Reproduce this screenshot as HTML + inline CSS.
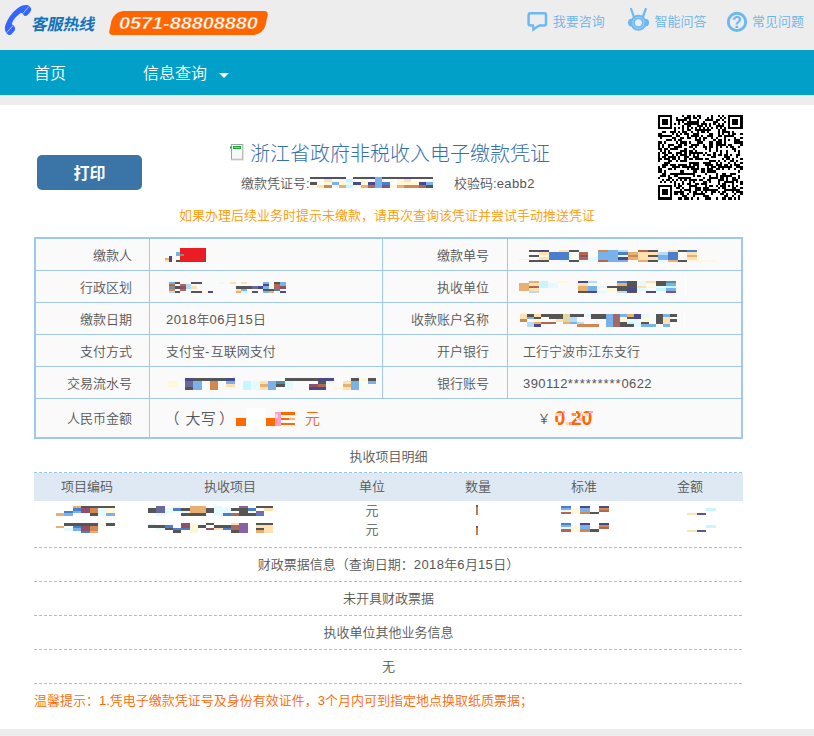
<!DOCTYPE html>
<html lang="zh-CN">
<head>
<meta charset="utf-8">
<title>浙江省政府非税收入电子缴款凭证</title>
<style>
*{box-sizing:border-box;margin:0;padding:0}
html,body{width:814px;height:736px;overflow:hidden;background:#ededed}
body{position:relative;font-family:"Liberation Sans","Noto Sans CJK SC",sans-serif;font-size:13px;font-weight:350;color:#555}
.abs{position:absolute;white-space:nowrap}
#top{left:0;top:0;width:814px;height:50px;background:#ededed}
#nav{left:0;top:50px;width:814px;height:45px;background:#00a0c9}
#main{left:0;top:105px;width:814px;height:624px;background:#fff}
.navt{color:#fff;font-size:16px;line-height:20px}
.hl{color:#6ab4ec;font-size:13px;line-height:16px}
.lbl{text-align:right;line-height:16px}
.val{line-height:16px}
.vl{background:#9fc8ee;width:1px}
.hln{background:#9fc8ee;height:1px}
.dash{left:34px;width:709px;height:1px;background:repeating-linear-gradient(90deg,#96c7ee 0,#96c7ee 3px,transparent 3px,transparent 5px)}
.c{text-align:center;line-height:16px}
.d{letter-spacing:.4px}
.st{letter-spacing:.9px}
</style>
</head>
<body>
<div id="top" class="abs"></div>
<div id="nav" class="abs"></div>
<div id="main" class="abs"></div>

<!-- header -->
<!--ICONS-->
<svg class="abs" style="left:0;top:0" width="814" height="104" viewBox="0 0 814 104">
<!-- phone -->
<path d="M28.3 5.2C24 4.5 20 6 16.3 9.2C12 13 8 18 6 23.4C4.8 26 4.5 29 5.5 31.5C6.5 33.5 8 35 9.5 35C11 35 12 33.5 14.7 30.4C15.5 29 15.5 27.5 13.6 25.5L11.7 23.9C13 20 16 16.5 18.5 14.7C20 13.2 21.5 12.6 22.3 13.3C23 14.5 24 16 25.5 16C27 16 29 13.5 30.4 11.7C31.5 10 31.5 8.5 30.4 7.3Z" fill="#3366ff"/>
<path d="M28.8 6.5L22.8 13.6M13 25.5L6.8 32.6" stroke="#e8e8f4" stroke-width=".7" fill="none"/>
<!-- chat -->
<rect x="528.6" y="13.3" width="17.4" height="12.2" rx="2" fill="none" stroke="#6cb8f0" stroke-width="2.5"/>
<path d="M532 25L532.3 31.8L541 25.5Z" fill="#6cb8f0"/>
<path d="M534 23L534.3 27.2L539 24.2L539 23Z" fill="#ededed"/>
<!-- robot -->
<path d="M631.1 9L633.8 16.5M645.8 9L643 16.5" stroke="#6cb8f0" stroke-width="2.2" stroke-linecap="round" fill="none"/>
<circle cx="631.8" cy="22.6" r="3.9" fill="#6cb8f0"/><circle cx="645.2" cy="22.6" r="3.9" fill="#6cb8f0"/>
<circle cx="638.4" cy="22.8" r="8" fill="#6cb8f0"/>
<circle cx="638.4" cy="22.8" r="5.6" fill="none" stroke="#d4e8f8" stroke-width=".6"/>
<circle cx="638.4" cy="22.8" r="3.5" fill="#ededed"/>
<!-- question -->
<circle cx="737" cy="21.9" r="8.7" fill="none" stroke="#6cb8f0" stroke-width="2.9"/>
<text x="737" y="27.6" text-anchor="middle" font-family="Liberation Sans, sans-serif" font-weight="bold" font-size="16" fill="#6cb8f0">?</text>
</svg>
<!-- doc icon -->
<svg class="abs" style="left:228px;top:142px" width="18" height="20" viewBox="228 142 18 20">
<rect x="231.5" y="144.5" width="11.3" height="14.8" fill="#f6f9f9" stroke="#9aa6a8" stroke-width="1"/>
<rect x="230.8" y="159.4" width="13" height="1" fill="#c8cccc"/>
<rect x="233" y="146" width="8" height="3" fill="#22aa33"/>
<rect x="234" y="147" width="6" height="1" fill="#66dd77"/>
<path d="M230 146L232 147.5L230 149Z" fill="#22aa33"/>
</svg>
<!--/ICONS-->
<div class="abs" style="left:31.7px;top:14.5px;font-size:16px;line-height:20px;font-weight:bold;transform:skewX(-11deg);color:#1273bb;letter-spacing:-0.3px">客服热线</div>
<div class="abs" style="left:110.5px;top:11px;width:155px;height:24px;background:#ff6600;border-radius:10px 4px 10px 4px;transform:skewX(-12deg)"></div>
<div class="abs" style="left:119px;top:14.2px;font-size:17px;line-height:20px;font-weight:bold;font-style:italic;color:#fff;-webkit-text-stroke:0.35px #ff6600;transform-origin:0 50%;transform:scaleX(1.166)">0571-88808880</div>

<div class="abs hl" style="left:552.7px;top:13.5px">我要咨询</div>
<div class="abs hl" style="left:654.4px;top:13.5px">智能问答</div>
<div class="abs hl" style="left:752px;top:13.5px">常见问题</div>

<div class="abs navt" style="left:34px;top:64px">首页</div>
<div class="abs navt" style="left:143px;top:64px">信息查询</div>
<div class="abs" style="left:219px;top:73px;width:0;height:0;border-left:5px solid transparent;border-right:5px solid transparent;border-top:5px solid #fff"></div>

<!-- print button -->
<div class="abs" style="left:37px;top:155px;width:105px;height:35px;background:#3b75a8;border-radius:5px;color:#fff;font-size:16px;font-weight:bold;text-align:center;line-height:37px">打印</div>

<!-- title -->
<div class="abs" style="left:250px;top:141px;font-size:20px;line-height:26px;font-weight:300;color:#3570b0">浙江省政府非税收入电子缴款凭证</div>
<div class="abs" style="left:241px;top:175.7px;line-height:16px;color:#555">缴款凭证号:</div>
<div class="abs" style="left:454px;top:175.7px;line-height:16px;color:#555">校验码:<span class="d">eabb2</span></div>
<div class="abs" style="left:179px;top:208.4px;line-height:16px;color:#ff9900">如果办理后续业务时提示未缴款，请再次查询该凭证并尝试手动推送凭证</div>

<!-- table -->
<div class="abs" style="left:34px;top:237px;width:709px;height:202px;border:2px solid #9fc8ee;background:#fafafa"></div>
<div class="abs vl" style="left:149px;top:239px;height:198px"></div>
<div class="abs vl" style="left:382px;top:239px;height:159px"></div>
<div class="abs vl" style="left:507px;top:239px;height:159px"></div>
<div class="abs hln" style="left:36px;top:270px;width:705px"></div>
<div class="abs hln" style="left:36px;top:302px;width:705px"></div>
<div class="abs hln" style="left:36px;top:334px;width:705px"></div>
<div class="abs hln" style="left:36px;top:366px;width:705px"></div>
<div class="abs hln" style="left:36px;top:398px;width:705px"></div>

<div class="abs lbl" style="left:36px;width:96px;top:248px">缴款人</div>
<div class="abs lbl" style="left:36px;width:96px;top:280px">行政区划</div>
<div class="abs lbl" style="left:36px;width:96px;top:312px">缴款日期</div>
<div class="abs lbl" style="left:36px;width:96px;top:344px">支付方式</div>
<div class="abs lbl" style="left:36px;width:96px;top:376px">交易流水号</div>
<div class="abs lbl" style="left:36px;width:96px;top:411px">人民币金额</div>

<div class="abs lbl" style="left:383px;width:106px;top:248px">缴款单号</div>
<div class="abs lbl" style="left:383px;width:106px;top:280px">执收单位</div>
<div class="abs lbl" style="left:383px;width:106px;top:312px">收款账户名称</div>
<div class="abs lbl" style="left:383px;width:106px;top:344px">开户银行</div>
<div class="abs lbl" style="left:383px;width:106px;top:376px">银行账号</div>

<div class="abs val" style="left:166px;top:312px"><span class="d">2018</span>年<span class="d">06</span>月<span class="d">15</span>日</div>
<div class="abs val" style="left:166px;top:344px">支付宝<span style="letter-spacing:1.4px">-</span>互联网支付</div>
<div class="abs val" style="left:523px;top:344px">工行宁波市江东支行</div>
<div class="abs val" style="left:523px;top:376px"><span class="d">390112</span><span class="st">*********</span><span class="d">0622</span></div>
<div class="abs val" style="left:164.5px;top:410px;font-size:15px;line-height:18px">（</div><div class="abs val" style="left:185.4px;top:410px;font-size:15px;line-height:18px;letter-spacing:.4px">大写</div><div class="abs val" style="left:219px;top:410px;font-size:15px;line-height:18px">）</div>
<div class="abs val" style="left:305px;top:410px;font-size:15px;line-height:18px;color:#ff6600">元</div>
<div class="abs val" style="left:537.5px;top:411px">￥</div>
<div class="abs" style="left:554.5px;top:406.6px;font-size:19.5px;line-height:22px;font-weight:bold;color:#ff6600;letter-spacing:0">0.20</div>

<div class="abs" style="left:685px;top:277px;width:1px;height:21px;background:#fff"></div>
<div class="abs" style="left:684px;top:311px;width:1px;height:18px;background:#fff"></div>
<!-- detail -->
<div class="abs c" style="left:34px;width:709px;top:448.7px">执收项目明细</div>
<div class="abs" style="left:34px;top:473px;width:709px;height:28px;background:#dfe9f4"></div>
<div class="abs dash" style="top:472px"></div>
<div class="abs c" style="left:37px;width:100px;top:479px">项目编码</div>
<div class="abs c" style="left:180px;width:100px;top:479px">执收项目</div>
<div class="abs c" style="left:322px;width:100px;top:479px">单位</div>
<div class="abs c" style="left:428px;width:100px;top:479px">数量</div>
<div class="abs c" style="left:534px;width:100px;top:479px">标准</div>
<div class="abs c" style="left:640px;width:100px;top:479px">金额</div>
<div class="abs c" style="left:322px;width:100px;top:503px">元</div>
<div class="abs c" style="left:322px;width:100px;top:522px">元</div>

<div class="abs dash" style="top:547px"></div>
<div class="abs c" style="left:34px;width:709px;top:557px">财政票据信息（查询日期：<span class="d">2018</span>年<span class="d">6</span>月<span class="d">15</span>日）</div>
<div class="abs dash" style="top:581px"></div>
<div class="abs c" style="left:34px;width:709px;top:591px">未开具财政票据</div>
<div class="abs dash" style="top:615px"></div>
<div class="abs c" style="left:34px;width:709px;top:625px">执收单位其他业务信息</div>
<div class="abs dash" style="top:649px"></div>
<div class="abs c" style="left:34px;width:709px;top:659px">无</div>
<div class="abs dash" style="top:683px"></div>
<div class="abs" style="left:34px;top:693px;line-height:16px;color:#ff6600">温馨提示：1.凭电子缴款凭证号及身份有效证件，3个月内可到指定地点换取纸质票据；</div>

<!--QR-->
<svg class="abs" style="left:658px;top:115px" width="85" height="85" viewBox="0 0 85 85" shape-rendering="crispEdges"><rect width="85" height="85" fill="#fff"/><path fill="#000" d="M0 0h14v2h-14zM24 0h2v2h-2zM29 0h4v2h-4zM35 0h2v2h-2zM39 0h4v2h-4zM53 0h2v2h-2zM60 0h2v2h-2zM64 0h2v2h-2zM70 0h15v2h-15zM0 2h2v2h-2zM12 2h2v2h-2zM18 2h2v2h-2zM26 2h7v2h-7zM35 2h4v2h-4zM41 2h2v2h-2zM49 2h2v2h-2zM53 2h2v2h-2zM62 2h2v2h-2zM66 2h2v2h-2zM70 2h2v2h-2zM82 2h3v2h-3zM0 4h2v2h-2zM4 4h6v2h-6zM12 4h2v2h-2zM18 4h11v2h-11zM31 4h2v2h-2zM39 4h2v2h-2zM47 4h8v2h-8zM58 4h4v2h-4zM64 4h2v2h-2zM70 4h2v2h-2zM74 4h6v2h-6zM82 4h3v2h-3zM0 6h2v2h-2zM4 6h6v2h-6zM12 6h2v2h-2zM20 6h2v2h-2zM24 6h2v2h-2zM29 6h12v2h-12zM45 6h2v2h-2zM55 6h5v2h-5zM66 6h2v2h-2zM70 6h2v2h-2zM74 6h6v2h-6zM82 6h3v2h-3zM0 8h2v2h-2zM4 8h6v2h-6zM12 8h2v2h-2zM16 8h2v2h-2zM20 8h2v2h-2zM26 8h15v2h-15zM43 8h6v2h-6zM51 8h2v2h-2zM55 8h3v2h-3zM60 8h2v2h-2zM64 8h2v2h-2zM70 8h2v2h-2zM74 8h6v2h-6zM82 8h3v2h-3zM0 10h2v2h-2zM12 10h2v2h-2zM24 10h2v2h-2zM29 10h4v2h-4zM39 10h6v2h-6zM47 10h2v2h-2zM51 10h2v2h-2zM58 10h8v2h-8zM70 10h2v2h-2zM82 10h3v2h-3zM0 12h14v2h-14zM16 12h2v2h-2zM20 12h2v2h-2zM24 12h2v2h-2zM29 12h2v2h-2zM33 12h2v2h-2zM37 12h2v2h-2zM41 12h2v2h-2zM45 12h2v2h-2zM49 12h2v2h-2zM53 12h2v2h-2zM58 12h2v2h-2zM62 12h2v2h-2zM66 12h2v2h-2zM70 12h15v2h-15zM16 14h2v2h-2zM24 14h2v2h-2zM29 14h4v2h-4zM37 14h16v2h-16zM60 14h2v2h-2zM64 14h4v2h-4zM4 16h4v2h-4zM12 16h6v2h-6zM20 16h2v2h-2zM24 16h5v2h-5zM33 16h2v2h-2zM39 16h2v2h-2zM43 16h4v2h-4zM49 16h2v2h-2zM60 16h2v2h-2zM64 16h8v2h-8zM74 16h2v2h-2zM0 18h4v2h-4zM14 18h2v2h-2zM18 18h2v2h-2zM22 18h2v2h-2zM26 18h5v2h-5zM35 18h6v2h-6zM51 18h4v2h-4zM60 18h2v2h-2zM64 18h2v2h-2zM70 18h2v2h-2zM74 18h4v2h-4zM82 18h3v2h-3zM0 20h14v2h-14zM18 20h4v2h-4zM29 20h2v2h-2zM33 20h8v2h-8zM43 20h2v2h-2zM49 20h6v2h-6zM60 20h4v2h-4zM66 20h10v2h-10zM2 22h2v2h-2zM14 22h4v2h-4zM22 22h4v2h-4zM29 22h4v2h-4zM37 22h2v2h-2zM41 22h2v2h-2zM45 22h4v2h-4zM53 22h2v2h-2zM58 22h2v2h-2zM66 22h2v2h-2zM76 22h2v2h-2zM82 22h3v2h-3zM8 24h6v2h-6zM16 24h2v2h-2zM20 24h4v2h-4zM37 24h6v2h-6zM45 24h2v2h-2zM55 24h3v2h-3zM60 24h4v2h-4zM66 24h2v2h-2zM70 24h2v2h-2zM76 24h6v2h-6zM0 26h4v3h-4zM6 26h2v3h-2zM18 26h2v3h-2zM22 26h7v3h-7zM31 26h2v3h-2zM39 26h6v3h-6zM51 26h4v3h-4zM58 26h6v3h-6zM66 26h2v3h-2zM76 26h9v3h-9zM0 29h2v2h-2zM4 29h2v2h-2zM10 29h6v2h-6zM20 29h4v2h-4zM26 29h3v2h-3zM33 29h8v2h-8zM45 29h2v2h-2zM51 29h4v2h-4zM58 29h10v2h-10zM70 29h4v2h-4zM82 29h3v2h-3zM0 31h2v2h-2zM4 31h2v2h-2zM10 31h2v2h-2zM16 31h8v2h-8zM31 31h4v2h-4zM37 31h2v2h-2zM45 31h4v2h-4zM51 31h4v2h-4zM58 31h2v2h-2zM62 31h2v2h-2zM68 31h2v2h-2zM72 31h4v2h-4zM80 31h2v2h-2zM0 33h4v2h-4zM6 33h4v2h-4zM12 33h8v2h-8zM26 33h3v2h-3zM35 33h2v2h-2zM47 33h2v2h-2zM51 33h2v2h-2zM58 33h2v2h-2zM74 33h4v2h-4zM2 35h2v2h-2zM6 35h2v2h-2zM10 35h2v2h-2zM22 35h7v2h-7zM31 35h4v2h-4zM37 35h2v2h-2zM51 35h2v2h-2zM58 35h2v2h-2zM62 35h2v2h-2zM68 35h2v2h-2zM76 35h2v2h-2zM80 35h2v2h-2zM0 37h2v2h-2zM4 37h4v2h-4zM10 37h4v2h-4zM18 37h6v2h-6zM26 37h3v2h-3zM31 37h14v2h-14zM47 37h2v2h-2zM55 37h3v2h-3zM62 37h2v2h-2zM68 37h2v2h-2zM80 37h2v2h-2zM0 39h2v2h-2zM6 39h4v2h-4zM14 39h2v2h-2zM18 39h2v2h-2zM22 39h7v2h-7zM31 39h2v2h-2zM35 39h2v2h-2zM39 39h2v2h-2zM45 39h2v2h-2zM49 39h4v2h-4zM55 39h3v2h-3zM60 39h4v2h-4zM66 39h4v2h-4zM72 39h2v2h-2zM78 39h4v2h-4zM0 41h2v2h-2zM4 41h4v2h-4zM10 41h8v2h-8zM20 41h2v2h-2zM26 41h5v2h-5zM35 41h6v2h-6zM53 41h5v2h-5zM66 41h6v2h-6zM78 41h2v2h-2zM0 43h4v2h-4zM6 43h6v2h-6zM14 43h4v2h-4zM20 43h2v2h-2zM26 43h3v2h-3zM31 43h4v2h-4zM37 43h8v2h-8zM47 43h4v2h-4zM64 43h2v2h-2zM68 43h4v2h-4zM74 43h2v2h-2zM82 43h3v2h-3zM0 45h2v2h-2zM10 45h4v2h-4zM18 45h2v2h-2zM22 45h7v2h-7zM51 45h7v2h-7zM60 45h2v2h-2zM66 45h2v2h-2zM72 45h4v2h-4zM78 45h2v2h-2zM6 47h6v2h-6zM31 47h10v2h-10zM45 47h8v2h-8zM58 47h2v2h-2zM62 47h2v2h-2zM70 47h2v2h-2zM76 47h2v2h-2zM82 47h3v2h-3zM4 49h6v2h-6zM12 49h6v2h-6zM20 49h9v2h-9zM31 49h2v2h-2zM35 49h6v2h-6zM47 49h8v2h-8zM58 49h6v2h-6zM66 49h4v2h-4zM72 49h2v2h-2zM76 49h6v2h-6zM0 51h2v2h-2zM4 51h4v2h-4zM14 51h8v2h-8zM24 51h13v2h-13zM39 51h2v2h-2zM49 51h2v2h-2zM53 51h5v2h-5zM60 51h14v2h-14zM78 51h7v2h-7zM0 53h4v2h-4zM10 53h4v2h-4zM16 53h2v2h-2zM29 53h2v2h-2zM33 53h8v2h-8zM43 53h4v2h-4zM49 53h6v2h-6zM58 53h4v2h-4zM64 53h2v2h-2zM70 53h2v2h-2zM76 53h2v2h-2zM82 53h3v2h-3zM0 55h4v3h-4zM6 55h2v3h-2zM22 55h4v3h-4zM35 55h4v3h-4zM43 55h4v3h-4zM49 55h9v3h-9zM80 55h2v3h-2zM4 58h4v2h-4zM12 58h25v2h-25zM47 58h2v2h-2zM58 58h2v2h-2zM64 58h4v2h-4zM72 58h6v2h-6zM2 60h6v2h-6zM10 60h2v2h-2zM16 60h4v2h-4zM35 60h2v2h-2zM39 60h4v2h-4zM51 60h2v2h-2zM58 60h2v2h-2zM62 60h12v2h-12zM80 60h2v2h-2zM0 62h2v2h-2zM10 62h4v2h-4zM20 62h13v2h-13zM45 62h2v2h-2zM51 62h9v2h-9zM62 62h4v2h-4zM68 62h2v2h-2zM74 62h4v2h-4zM80 62h2v2h-2zM4 64h2v2h-2zM8 64h4v2h-4zM14 64h2v2h-2zM18 64h2v2h-2zM22 64h2v2h-2zM26 64h3v2h-3zM31 64h8v2h-8zM41 64h4v2h-4zM49 64h4v2h-4zM60 64h6v2h-6zM68 64h2v2h-2zM74 64h6v2h-6zM2 66h2v2h-2zM6 66h2v2h-2zM12 66h2v2h-2zM16 66h2v2h-2zM24 66h2v2h-2zM31 66h2v2h-2zM35 66h2v2h-2zM45 66h4v2h-4zM51 66h2v2h-2zM60 66h2v2h-2zM66 66h10v2h-10zM78 66h2v2h-2zM82 66h3v2h-3zM16 68h2v2h-2zM20 68h2v2h-2zM24 68h2v2h-2zM29 68h4v2h-4zM37 68h4v2h-4zM43 68h6v2h-6zM60 68h2v2h-2zM64 68h4v2h-4zM74 68h2v2h-2zM82 68h3v2h-3zM0 70h14v2h-14zM16 70h2v2h-2zM20 70h4v2h-4zM31 70h8v2h-8zM47 70h2v2h-2zM51 70h4v2h-4zM58 70h2v2h-2zM62 70h6v2h-6zM70 70h2v2h-2zM74 70h2v2h-2zM78 70h2v2h-2zM0 72h2v2h-2zM12 72h2v2h-2zM18 72h4v2h-4zM24 72h2v2h-2zM31 72h2v2h-2zM37 72h6v2h-6zM45 72h6v2h-6zM60 72h2v2h-2zM64 72h4v2h-4zM74 72h4v2h-4zM82 72h3v2h-3zM0 74h2v2h-2zM4 74h6v2h-6zM12 74h2v2h-2zM22 74h2v2h-2zM26 74h7v2h-7zM37 74h6v2h-6zM45 74h15v2h-15zM66 74h16v2h-16zM0 76h2v2h-2zM4 76h6v2h-6zM12 76h2v2h-2zM16 76h10v2h-10zM31 76h2v2h-2zM35 76h4v2h-4zM43 76h2v2h-2zM47 76h2v2h-2zM53 76h5v2h-5zM60 76h2v2h-2zM64 76h4v2h-4zM74 76h2v2h-2zM78 76h7v2h-7zM0 78h2v2h-2zM4 78h6v2h-6zM12 78h2v2h-2zM16 78h4v2h-4zM22 78h4v2h-4zM29 78h2v2h-2zM35 78h12v2h-12zM53 78h2v2h-2zM62 78h4v2h-4zM68 78h2v2h-2zM76 78h2v2h-2zM82 78h3v2h-3zM0 80h2v2h-2zM12 80h2v2h-2zM24 80h5v2h-5zM35 80h2v2h-2zM45 80h6v2h-6zM66 80h4v2h-4zM74 80h2v2h-2zM80 80h2v2h-2zM0 82h14v3h-14zM20 82h4v3h-4zM26 82h5v3h-5zM33 82h2v3h-2zM39 82h2v3h-2zM47 82h6v3h-6zM58 82h2v3h-2zM64 82h4v3h-4zM70 82h4v3h-4zM76 82h2v3h-2zM80 82h2v3h-2z"/></svg>
<!--/QR-->
<!--MOSAIC-->
<svg class="abs" style="left:0;top:0;opacity:1" width="814" height="736" viewBox="0 0 814 736" shape-rendering="crispEdges"><rect x="310" y="177" width="14.48" height="2" fill="#555555"/><rect x="324.48" y="177" width="7.24" height="2" fill="#4a4a8a"/><rect x="331.72" y="177" width="7.24" height="2" fill="#555555"/><rect x="338.96" y="177" width="7.24" height="2" fill="#4a4a8a"/><rect x="353.44" y="177" width="14.48" height="2" fill="#555555"/><rect x="367.92" y="177" width="7.24" height="2" fill="#4a4a8a"/><rect x="375.16" y="177" width="7.24" height="2" fill="#78b2e8"/><rect x="382.4" y="177" width="21.72" height="2" fill="#555555"/><rect x="404.12" y="177" width="7.24" height="2" fill="#4a4a8a"/><rect x="411.36" y="177" width="21.72" height="2" fill="#555555"/><rect x="324.48" y="179" width="7.24" height="3" fill="#ffe0b0"/><rect x="338.96" y="179" width="7.24" height="3" fill="#fff8d8"/><rect x="346.2" y="179" width="7.24" height="3" fill="#c8f6ff"/><rect x="360.68" y="179" width="7.24" height="3" fill="#fff8d8"/><rect x="375.16" y="179" width="7.24" height="3" fill="#78b2e8"/><rect x="396.88" y="179" width="7.24" height="3" fill="#fff8d8"/><rect x="404.12" y="179" width="7.24" height="3" fill="#ffe0b0"/><rect x="310" y="182" width="7.24" height="3" fill="#555555"/><rect x="324.48" y="182" width="7.24" height="3" fill="#fff8d8"/><rect x="331.72" y="182" width="7.24" height="3" fill="#78b2e8"/><rect x="338.96" y="182" width="7.24" height="3" fill="#fff8d8"/><rect x="346.2" y="182" width="7.24" height="3" fill="#e4faff"/><rect x="353.44" y="182" width="7.24" height="3" fill="#4a4a8a"/><rect x="360.68" y="182" width="7.24" height="3" fill="#fff8d8"/><rect x="367.92" y="182" width="7.24" height="3" fill="#4a4a8a"/><rect x="375.16" y="182" width="7.24" height="3" fill="#78b2e8"/><rect x="382.4" y="182" width="7.24" height="3" fill="#4a7fd0"/><rect x="396.88" y="182" width="21.72" height="3" fill="#fff8d8"/><rect x="418.6" y="182" width="7.24" height="3" fill="#4a4a8a"/><rect x="425.84" y="182" width="7.24" height="3" fill="#78b2e8"/><rect x="310" y="185" width="7.24" height="3" fill="#fff8d8"/><rect x="317.24" y="185" width="7.24" height="3" fill="#ffe0b0"/><rect x="324.48" y="185" width="7.24" height="3" fill="#d08850"/><rect x="338.96" y="185" width="7.24" height="3" fill="#e8b070"/><rect x="346.2" y="185" width="7.24" height="3" fill="#c8f6ff"/><rect x="353.44" y="185" width="7.24" height="3" fill="#fff8d8"/><rect x="360.68" y="185" width="7.24" height="3" fill="#e8b070"/><rect x="367.92" y="185" width="7.24" height="3" fill="#b06850"/><rect x="375.16" y="185" width="7.24" height="3" fill="#78b2e8"/><rect x="382.4" y="185" width="7.24" height="3" fill="#905068"/><rect x="389.64" y="185" width="7.24" height="3" fill="#fff8d8"/><rect x="396.88" y="185" width="7.24" height="3" fill="#e8b070"/><rect x="404.12" y="185" width="14.48" height="3" fill="#d08850"/><rect x="418.6" y="185" width="7.24" height="3" fill="#b06850"/><rect x="425.84" y="185" width="7.24" height="3" fill="#555555"/><rect x="180" y="248" width="26" height="14" fill="#ec1c24"/><rect x="168.5" y="256" width="3.5" height="2" fill="#4a4a8a"/><rect x="165" y="258" width="3.5" height="2" fill="#e8b070"/><rect x="168.5" y="258" width="3.5" height="2" fill="#4a4a8a"/><rect x="165" y="260" width="3.5" height="2" fill="#ffe0b0"/><rect x="168.5" y="260" width="3.5" height="2" fill="#4a4a8a"/><rect x="176" y="252" width="4" height="2" fill="#78b2e8"/><rect x="176" y="254" width="4" height="2" fill="#78b2e8"/><rect x="180" y="254" width="4" height="2" fill="#8a8a8a"/><rect x="176" y="260" width="4" height="2" fill="#555555"/><rect x="203" y="260" width="3" height="2" fill="#555"/><rect x="169" y="282" width="5.55" height="2.2" fill="#78b2e8"/><rect x="174.55" y="282" width="5.55" height="2.2" fill="#555555"/><rect x="191.2" y="282" width="11.1" height="2.2" fill="#555555"/><rect x="218.95" y="282" width="5.55" height="2.2" fill="#e4faff"/><rect x="230.05" y="282" width="5.55" height="2.2" fill="#ffe0b0"/><rect x="241.15" y="282" width="5.55" height="2.2" fill="#ffe0b0"/><rect x="263.35" y="282" width="5.55" height="2.2" fill="#78b2e8"/><rect x="274.45" y="282" width="5.55" height="2.2" fill="#555555"/><rect x="280" y="282" width="5.55" height="2.2" fill="#78b2e8"/><rect x="169" y="284.2" width="5.55" height="2.2" fill="#b06850"/><rect x="180.1" y="284.2" width="5.55" height="2.2" fill="#b06850"/><rect x="185.65" y="284.2" width="5.55" height="2.2" fill="#b8dcf8"/><rect x="263.35" y="284.2" width="5.55" height="2.2" fill="#4a4a8a"/><rect x="268.9" y="284.2" width="5.55" height="2.2" fill="#fff8d8"/><rect x="274.45" y="284.2" width="5.55" height="2.2" fill="#b06850"/><rect x="280" y="284.2" width="5.55" height="2.2" fill="#78b2e8"/><rect x="169" y="286.4" width="5.55" height="2.2" fill="#8a8a8a"/><rect x="174.55" y="286.4" width="5.55" height="2.2" fill="#555555"/><rect x="180.1" y="286.4" width="5.55" height="2.2" fill="#905068"/><rect x="185.65" y="286.4" width="5.55" height="2.2" fill="#b8dcf8"/><rect x="191.2" y="286.4" width="5.55" height="2.2" fill="#ffe0b0"/><rect x="235.6" y="286.4" width="16.65" height="2.2" fill="#555555"/><rect x="252.25" y="286.4" width="5.55" height="2.2" fill="#6a6a9a"/><rect x="257.8" y="286.4" width="5.55" height="2.2" fill="#4a4a8a"/><rect x="263.35" y="286.4" width="5.55" height="2.2" fill="#78b2e8"/><rect x="268.9" y="286.4" width="5.55" height="2.2" fill="#e4faff"/><rect x="274.45" y="286.4" width="5.55" height="2.2" fill="#b06850"/><rect x="280" y="286.4" width="5.55" height="2.2" fill="#905068"/><rect x="169" y="288.6" width="5.55" height="2.2" fill="#d08850"/><rect x="180.1" y="288.6" width="5.55" height="2.2" fill="#b06850"/><rect x="185.65" y="288.6" width="5.55" height="2.2" fill="#e4faff"/><rect x="235.6" y="288.6" width="5.55" height="2.2" fill="#ffe0b0"/><rect x="241.15" y="288.6" width="5.55" height="2.2" fill="#78b2e8"/><rect x="263.35" y="288.6" width="11.1" height="2.2" fill="#555555"/><rect x="274.45" y="288.6" width="5.55" height="2.2" fill="#4a7fd0"/><rect x="169" y="290.8" width="5.55" height="2.2" fill="#b8dcf8"/><rect x="174.55" y="290.8" width="5.55" height="2.2" fill="#555555"/><rect x="191.2" y="290.8" width="11.1" height="2.2" fill="#555555"/><rect x="202.3" y="290.8" width="5.55" height="2.2" fill="#fff8d8"/><rect x="207.85" y="290.8" width="5.55" height="2.2" fill="#4a4a8a"/><rect x="235.6" y="290.8" width="5.55" height="2.2" fill="#e8b070"/><rect x="241.15" y="290.8" width="5.55" height="2.2" fill="#c8f6ff"/><rect x="252.25" y="290.8" width="5.55" height="2.2" fill="#555555"/><rect x="263.35" y="290.8" width="5.55" height="2.2" fill="#78b2e8"/><rect x="268.9" y="290.8" width="5.55" height="2.2" fill="#e8b070"/><rect x="280" y="290.8" width="5.55" height="2.2" fill="#4a4a8a"/><rect x="529" y="249.5" width="9.9" height="2.5" fill="#555555"/><rect x="538.9" y="249.5" width="9.9" height="2.5" fill="#4a4a8a"/><rect x="558.7" y="249.5" width="9.9" height="2.5" fill="#ffe0b0"/><rect x="568.6" y="249.5" width="9.9" height="2.5" fill="#555555"/><rect x="578.5" y="249.5" width="9.9" height="2.5" fill="#e4faff"/><rect x="598.3" y="249.5" width="9.9" height="2.5" fill="#d08850"/><rect x="608.2" y="249.5" width="9.9" height="2.5" fill="#78b2e8"/><rect x="618.1" y="249.5" width="9.9" height="2.5" fill="#b8dcf8"/><rect x="637.9" y="249.5" width="9.9" height="2.5" fill="#b06850"/><rect x="647.8" y="249.5" width="9.9" height="2.5" fill="#555555"/><rect x="667.6" y="249.5" width="9.9" height="2.5" fill="#ffe0b0"/><rect x="677.5" y="249.5" width="9.9" height="2.5" fill="#555555"/><rect x="687.4" y="249.5" width="9.9" height="2.5" fill="#4a7fd0"/><rect x="538.9" y="252" width="9.9" height="2.5" fill="#ffe0b0"/><rect x="548.8" y="252" width="19.8" height="2.5" fill="#4a7fd0"/><rect x="578.5" y="252" width="9.9" height="2.5" fill="#b06850"/><rect x="598.3" y="252" width="19.8" height="2.5" fill="#78b2e8"/><rect x="618.1" y="252" width="9.9" height="2.5" fill="#4a7fd0"/><rect x="628" y="252" width="9.9" height="2.5" fill="#e8b070"/><rect x="637.9" y="252" width="19.8" height="2.5" fill="#ffe0b0"/><rect x="657.7" y="252" width="9.9" height="2.5" fill="#b8dcf8"/><rect x="667.6" y="252" width="9.9" height="2.5" fill="#4a7fd0"/><rect x="687.4" y="252" width="9.9" height="2.5" fill="#ffe0b0"/><rect x="529" y="254.5" width="9.9" height="2.5" fill="#555555"/><rect x="538.9" y="254.5" width="9.9" height="2.5" fill="#fff8d8"/><rect x="548.8" y="254.5" width="19.8" height="2.5" fill="#4a7fd0"/><rect x="578.5" y="254.5" width="9.9" height="2.5" fill="#905068"/><rect x="598.3" y="254.5" width="19.8" height="2.5" fill="#78b2e8"/><rect x="618.1" y="254.5" width="9.9" height="2.5" fill="#e4faff"/><rect x="628" y="254.5" width="9.9" height="2.5" fill="#d08850"/><rect x="637.9" y="254.5" width="9.9" height="2.5" fill="#ffe0b0"/><rect x="647.8" y="254.5" width="9.9" height="2.5" fill="#555555"/><rect x="657.7" y="254.5" width="9.9" height="2.5" fill="#78b2e8"/><rect x="667.6" y="254.5" width="9.9" height="2.5" fill="#4a7fd0"/><rect x="687.4" y="254.5" width="9.9" height="2.5" fill="#e8b070"/><rect x="538.9" y="257" width="9.9" height="2.5" fill="#ffe0b0"/><rect x="548.8" y="257" width="19.8" height="2.5" fill="#4a7fd0"/><rect x="578.5" y="257" width="9.9" height="2.5" fill="#b06850"/><rect x="588.4" y="257" width="9.9" height="2.5" fill="#e4faff"/><rect x="598.3" y="257" width="19.8" height="2.5" fill="#78b2e8"/><rect x="618.1" y="257" width="9.9" height="2.5" fill="#4a4a8a"/><rect x="628" y="257" width="9.9" height="2.5" fill="#e8b070"/><rect x="637.9" y="257" width="19.8" height="2.5" fill="#ffe0b0"/><rect x="657.7" y="257" width="9.9" height="2.5" fill="#78b2e8"/><rect x="667.6" y="257" width="9.9" height="2.5" fill="#4a7fd0"/><rect x="687.4" y="257" width="9.9" height="2.5" fill="#ffe0b0"/><rect x="529" y="259.5" width="19.8" height="2.5" fill="#555555"/><rect x="558.7" y="259.5" width="9.9" height="2.5" fill="#e4faff"/><rect x="568.6" y="259.5" width="9.9" height="2.5" fill="#555555"/><rect x="578.5" y="259.5" width="19.8" height="2.5" fill="#e4faff"/><rect x="598.3" y="259.5" width="9.9" height="2.5" fill="#b06850"/><rect x="608.2" y="259.5" width="19.8" height="2.5" fill="#78b2e8"/><rect x="637.9" y="259.5" width="9.9" height="2.5" fill="#e8b070"/><rect x="647.8" y="259.5" width="9.9" height="2.5" fill="#555555"/><rect x="657.7" y="259.5" width="9.9" height="2.5" fill="#e4faff"/><rect x="667.6" y="259.5" width="9.9" height="2.5" fill="#e8b070"/><rect x="677.5" y="259.5" width="9.9" height="2.5" fill="#555555"/><rect x="687.4" y="259.5" width="29.7" height="2.5" fill="#fff8d8"/><rect x="519" y="258.5" width="10" height="1" fill="#fff4c0"/><rect x="528.8" y="280.5" width="9.8" height="2.5" fill="#e8b070"/><rect x="538.6" y="280.5" width="9.8" height="2.5" fill="#c8f6ff"/><rect x="558.2" y="280.5" width="9.8" height="2.5" fill="#fff8d8"/><rect x="577.8" y="280.5" width="9.8" height="2.5" fill="#4a4a8a"/><rect x="587.6" y="280.5" width="9.8" height="2.5" fill="#b8dcf8"/><rect x="617" y="280.5" width="9.8" height="2.5" fill="#4a7fd0"/><rect x="626.8" y="280.5" width="9.8" height="2.5" fill="#555555"/><rect x="636.6" y="280.5" width="9.8" height="2.5" fill="#e4faff"/><rect x="646.4" y="280.5" width="9.8" height="2.5" fill="#ffe0b0"/><rect x="656.2" y="280.5" width="9.8" height="2.5" fill="#555555"/><rect x="666" y="280.5" width="9.8" height="2.5" fill="#5090a0"/><rect x="519" y="283" width="9.8" height="2.5" fill="#e8b070"/><rect x="528.8" y="283" width="9.8" height="2.5" fill="#ffe0b0"/><rect x="538.6" y="283" width="9.8" height="2.5" fill="#c8f6ff"/><rect x="548.4" y="283" width="9.8" height="2.5" fill="#e4faff"/><rect x="577.8" y="283" width="9.8" height="2.5" fill="#ffe0b0"/><rect x="587.6" y="283" width="9.8" height="2.5" fill="#fff8d8"/><rect x="617" y="283" width="9.8" height="2.5" fill="#e8b070"/><rect x="626.8" y="283" width="9.8" height="2.5" fill="#555555"/><rect x="636.6" y="283" width="9.8" height="2.5" fill="#e4faff"/><rect x="656.2" y="283" width="9.8" height="2.5" fill="#555555"/><rect x="666" y="283" width="9.8" height="2.5" fill="#78b2e8"/><rect x="519" y="285.5" width="9.8" height="2.5" fill="#e8b070"/><rect x="528.8" y="285.5" width="9.8" height="2.5" fill="#b06850"/><rect x="538.6" y="285.5" width="9.8" height="2.5" fill="#c8f6ff"/><rect x="548.4" y="285.5" width="9.8" height="2.5" fill="#e4faff"/><rect x="577.8" y="285.5" width="9.8" height="2.5" fill="#e8b070"/><rect x="587.6" y="285.5" width="9.8" height="2.5" fill="#78b2e8"/><rect x="597.4" y="285.5" width="9.8" height="2.5" fill="#e4faff"/><rect x="607.2" y="285.5" width="29.4" height="2.5" fill="#555555"/><rect x="636.6" y="285.5" width="9.8" height="2.5" fill="#ffe0b0"/><rect x="646.4" y="285.5" width="9.8" height="2.5" fill="#fff8d8"/><rect x="656.2" y="285.5" width="9.8" height="2.5" fill="#e4faff"/><rect x="666" y="285.5" width="9.8" height="2.5" fill="#c8f6ff"/><rect x="519" y="288" width="9.8" height="2.5" fill="#e8b070"/><rect x="528.8" y="288" width="9.8" height="2.5" fill="#ffe0b0"/><rect x="577.8" y="288" width="9.8" height="2.5" fill="#e8b070"/><rect x="587.6" y="288" width="9.8" height="2.5" fill="#78b2e8"/><rect x="607.2" y="288" width="9.8" height="2.5" fill="#fff8d8"/><rect x="617" y="288" width="9.8" height="2.5" fill="#555555"/><rect x="626.8" y="288" width="9.8" height="2.5" fill="#4a4a8a"/><rect x="636.6" y="288" width="9.8" height="2.5" fill="#e4faff"/><rect x="656.2" y="288" width="9.8" height="2.5" fill="#c8f6ff"/><rect x="666" y="288" width="9.8" height="2.5" fill="#78b2e8"/><rect x="528.8" y="290.5" width="9.8" height="2.5" fill="#b8dcf8"/><rect x="577.8" y="290.5" width="9.8" height="2.5" fill="#555555"/><rect x="587.6" y="290.5" width="9.8" height="2.5" fill="#4a4a8a"/><rect x="597.4" y="290.5" width="9.8" height="2.5" fill="#e4faff"/><rect x="617" y="290.5" width="9.8" height="2.5" fill="#b8dcf8"/><rect x="626.8" y="290.5" width="9.8" height="2.5" fill="#555555"/><rect x="646.4" y="290.5" width="9.8" height="2.5" fill="#4a4a8a"/><rect x="666" y="290.5" width="9.8" height="2.5" fill="#905068"/><rect x="520" y="314" width="7.14" height="2.5" fill="#ffe0b0"/><rect x="527.14" y="314" width="7.14" height="2.5" fill="#555555"/><rect x="534.28" y="314" width="7.14" height="2.5" fill="#ffe0b0"/><rect x="541.42" y="314" width="21.42" height="2.5" fill="#555555"/><rect x="562.84" y="314" width="7.14" height="2.5" fill="#e0d8a0"/><rect x="569.98" y="314" width="14.28" height="2.5" fill="#555555"/><rect x="584.26" y="314" width="7.14" height="2.5" fill="#e4faff"/><rect x="591.4" y="314" width="14.28" height="2.5" fill="#555555"/><rect x="605.68" y="314" width="7.14" height="2.5" fill="#78b2e8"/><rect x="612.82" y="314" width="7.14" height="2.5" fill="#a06868"/><rect x="619.96" y="314" width="7.14" height="2.5" fill="#78b2e8"/><rect x="627.1" y="314" width="7.14" height="2.5" fill="#e8b070"/><rect x="634.24" y="314" width="7.14" height="2.5" fill="#4a4a8a"/><rect x="641.38" y="314" width="7.14" height="2.5" fill="#e4faff"/><rect x="655.66" y="314" width="7.14" height="2.5" fill="#555555"/><rect x="662.8" y="314" width="7.14" height="2.5" fill="#78b2e8"/><rect x="669.94" y="314" width="7.14" height="2.5" fill="#555555"/><rect x="520" y="316.5" width="7.14" height="2.5" fill="#ffe0b0"/><rect x="527.14" y="316.5" width="7.14" height="2.5" fill="#78b2e8"/><rect x="534.28" y="316.5" width="7.14" height="2.5" fill="#555555"/><rect x="548.56" y="316.5" width="14.28" height="2.5" fill="#555555"/><rect x="562.84" y="316.5" width="7.14" height="2.5" fill="#e0d8a0"/><rect x="569.98" y="316.5" width="7.14" height="2.5" fill="#b8dcf8"/><rect x="591.4" y="316.5" width="14.28" height="2.5" fill="#555555"/><rect x="605.68" y="316.5" width="7.14" height="2.5" fill="#78b2e8"/><rect x="612.82" y="316.5" width="7.14" height="2.5" fill="#a06868"/><rect x="619.96" y="316.5" width="7.14" height="2.5" fill="#fff8d8"/><rect x="627.1" y="316.5" width="7.14" height="2.5" fill="#555555"/><rect x="634.24" y="316.5" width="7.14" height="2.5" fill="#4a4a8a"/><rect x="641.38" y="316.5" width="7.14" height="2.5" fill="#fff8d8"/><rect x="655.66" y="316.5" width="7.14" height="2.5" fill="#555555"/><rect x="662.8" y="316.5" width="7.14" height="2.5" fill="#ffe0b0"/><rect x="520" y="319" width="7.14" height="2.5" fill="#d08850"/><rect x="534.28" y="319" width="7.14" height="2.5" fill="#fff8d8"/><rect x="555.7" y="319" width="7.14" height="2.5" fill="#ffe0b0"/><rect x="562.84" y="319" width="7.14" height="2.5" fill="#e0d8a0"/><rect x="569.98" y="319" width="7.14" height="2.5" fill="#b8dcf8"/><rect x="605.68" y="319" width="7.14" height="2.5" fill="#78b2e8"/><rect x="612.82" y="319" width="7.14" height="2.5" fill="#a06868"/><rect x="619.96" y="319" width="7.14" height="2.5" fill="#fff8d8"/><rect x="627.1" y="319" width="14.28" height="2.5" fill="#e4faff"/><rect x="641.38" y="319" width="7.14" height="2.5" fill="#fff8d8"/><rect x="655.66" y="319" width="7.14" height="2.5" fill="#555555"/><rect x="662.8" y="319" width="7.14" height="2.5" fill="#ffe0b0"/><rect x="669.94" y="319" width="7.14" height="2.5" fill="#555555"/><rect x="527.14" y="321.5" width="7.14" height="2.5" fill="#b8dcf8"/><rect x="534.28" y="321.5" width="7.14" height="2.5" fill="#e8b070"/><rect x="541.42" y="321.5" width="14.28" height="2.5" fill="#b06850"/><rect x="562.84" y="321.5" width="7.14" height="2.5" fill="#e8b070"/><rect x="569.98" y="321.5" width="7.14" height="2.5" fill="#78b2e8"/><rect x="577.12" y="321.5" width="7.14" height="2.5" fill="#b8dcf8"/><rect x="605.68" y="321.5" width="7.14" height="2.5" fill="#78b2e8"/><rect x="612.82" y="321.5" width="7.14" height="2.5" fill="#a06868"/><rect x="619.96" y="321.5" width="7.14" height="2.5" fill="#555555"/><rect x="627.1" y="321.5" width="7.14" height="2.5" fill="#c8f6ff"/><rect x="634.24" y="321.5" width="7.14" height="2.5" fill="#e4faff"/><rect x="641.38" y="321.5" width="7.14" height="2.5" fill="#555555"/><rect x="655.66" y="321.5" width="7.14" height="2.5" fill="#555555"/><rect x="662.8" y="321.5" width="7.14" height="2.5" fill="#ffe0b0"/><rect x="527.14" y="324" width="7.14" height="2.5" fill="#b8dcf8"/><rect x="534.28" y="324" width="7.14" height="2.5" fill="#4a4a8a"/><rect x="577.12" y="324" width="21.42" height="2.5" fill="#d08850"/><rect x="605.68" y="324" width="7.14" height="2.5" fill="#78b2e8"/><rect x="612.82" y="324" width="7.14" height="2.5" fill="#a06868"/><rect x="619.96" y="324" width="14.28" height="2.5" fill="#555555"/><rect x="634.24" y="324" width="7.14" height="2.5" fill="#e4faff"/><rect x="641.38" y="324" width="14.28" height="2.5" fill="#78b2e8"/><rect x="662.8" y="324" width="7.14" height="2.5" fill="#78b2e8"/><rect x="184.9" y="378" width="8.3" height="2.9" fill="#4a4a8a"/><rect x="193.2" y="378" width="33.2" height="2.9" fill="#555555"/><rect x="226.4" y="378" width="8.3" height="2.9" fill="#4a4a8a"/><rect x="284.5" y="378" width="33.2" height="2.9" fill="#555555"/><rect x="317.7" y="378" width="16.6" height="2.9" fill="#4a4a8a"/><rect x="350.9" y="378" width="8.3" height="2.9" fill="#555555"/><rect x="359.2" y="378" width="8.3" height="2.9" fill="#fff8d8"/><rect x="367.5" y="378" width="8.3" height="2.9" fill="#555555"/><rect x="168.3" y="380.9" width="8.3" height="2.9" fill="#fff8d8"/><rect x="184.9" y="380.9" width="8.3" height="2.9" fill="#6a6a9a"/><rect x="193.2" y="380.9" width="8.3" height="2.9" fill="#78b2e8"/><rect x="209.8" y="380.9" width="8.3" height="2.9" fill="#d08850"/><rect x="226.4" y="380.9" width="8.3" height="2.9" fill="#78b2e8"/><rect x="243" y="380.9" width="8.3" height="2.9" fill="#c8f6ff"/><rect x="251.3" y="380.9" width="8.3" height="2.9" fill="#e4faff"/><rect x="259.6" y="380.9" width="8.3" height="2.9" fill="#ffe0b0"/><rect x="267.9" y="380.9" width="8.3" height="2.9" fill="#78b2e8"/><rect x="276.2" y="380.9" width="8.3" height="2.9" fill="#5090a0"/><rect x="284.5" y="380.9" width="8.3" height="2.9" fill="#e4faff"/><rect x="317.7" y="380.9" width="8.3" height="2.9" fill="#555555"/><rect x="326" y="380.9" width="8.3" height="2.9" fill="#e4faff"/><rect x="342.6" y="380.9" width="8.3" height="2.9" fill="#ffe0b0"/><rect x="350.9" y="380.9" width="8.3" height="2.9" fill="#78b2e8"/><rect x="367.5" y="380.9" width="8.3" height="2.9" fill="#78b2e8"/><rect x="168.3" y="383.8" width="8.3" height="2.9" fill="#fff8d8"/><rect x="184.9" y="383.8" width="8.3" height="2.9" fill="#6a6a9a"/><rect x="193.2" y="383.8" width="8.3" height="2.9" fill="#78b2e8"/><rect x="209.8" y="383.8" width="8.3" height="2.9" fill="#d08850"/><rect x="226.4" y="383.8" width="8.3" height="2.9" fill="#ffe0b0"/><rect x="243" y="383.8" width="8.3" height="2.9" fill="#c8f6ff"/><rect x="251.3" y="383.8" width="8.3" height="2.9" fill="#e4faff"/><rect x="259.6" y="383.8" width="8.3" height="2.9" fill="#e8b070"/><rect x="267.9" y="383.8" width="8.3" height="2.9" fill="#78b2e8"/><rect x="276.2" y="383.8" width="8.3" height="2.9" fill="#555555"/><rect x="284.5" y="383.8" width="8.3" height="2.9" fill="#e4faff"/><rect x="309.4" y="383.8" width="8.3" height="2.9" fill="#905068"/><rect x="317.7" y="383.8" width="8.3" height="2.9" fill="#b06850"/><rect x="342.6" y="383.8" width="8.3" height="2.9" fill="#e8b070"/><rect x="350.9" y="383.8" width="8.3" height="2.9" fill="#78b2e8"/><rect x="184.9" y="386.7" width="8.3" height="2.9" fill="#555555"/><rect x="193.2" y="386.7" width="8.3" height="2.9" fill="#78b2e8"/><rect x="209.8" y="386.7" width="8.3" height="2.9" fill="#d08850"/><rect x="243" y="386.7" width="8.3" height="2.9" fill="#c8f6ff"/><rect x="251.3" y="386.7" width="8.3" height="2.9" fill="#e4faff"/><rect x="259.6" y="386.7" width="8.3" height="2.9" fill="#ffe0b0"/><rect x="267.9" y="386.7" width="8.3" height="2.9" fill="#78b2e8"/><rect x="284.5" y="386.7" width="8.3" height="2.9" fill="#e4faff"/><rect x="309.4" y="386.7" width="16.6" height="2.9" fill="#4a4a8a"/><rect x="334.3" y="386.7" width="8.3" height="2.9" fill="#fff8d8"/><rect x="342.6" y="386.7" width="8.3" height="2.9" fill="#ffe0b0"/><rect x="350.9" y="386.7" width="8.3" height="2.9" fill="#78b2e8"/><rect x="246" y="408" width="19.5" height="22" fill="#fff"/><rect x="236" y="417.5" width="10" height="8" fill="#ff6a00"/><rect x="265.5" y="417.5" width="9.5" height="8" fill="#ff6a00"/><rect x="275" y="412" width="6" height="13.5" fill="#ff9ec8"/><rect x="275" y="414" width="3" height="4" fill="#ffc8dc"/><rect x="281" y="412" width="14" height="2.5" fill="#ff6a00"/><rect x="281" y="417.5" width="8" height="2.5" fill="#ff6a00"/><rect x="289" y="417.5" width="6" height="2.5" fill="#ffb080"/><rect x="281" y="422.5" width="14" height="2.5" fill="#ff6a00"/><rect x="72.8" y="505.5" width="8.4" height="2.5" fill="#e8b070"/><rect x="81.2" y="505.5" width="33.6" height="2.5" fill="#555555"/><rect x="72.8" y="508" width="8.4" height="2.5" fill="#4a7fd0"/><rect x="81.2" y="508" width="8.4" height="2.5" fill="#905068"/><rect x="89.6" y="508" width="8.4" height="2.5" fill="#d08850"/><rect x="98" y="508" width="8.4" height="2.5" fill="#e4faff"/><rect x="106.4" y="508" width="8.4" height="2.5" fill="#fff8d8"/><rect x="64.4" y="510.5" width="8.4" height="2.5" fill="#4a7fd0"/><rect x="72.8" y="510.5" width="8.4" height="2.5" fill="#78b2e8"/><rect x="81.2" y="510.5" width="8.4" height="2.5" fill="#905068"/><rect x="89.6" y="510.5" width="8.4" height="2.5" fill="#d08850"/><rect x="98" y="510.5" width="8.4" height="2.5" fill="#e4faff"/><rect x="106.4" y="510.5" width="8.4" height="2.5" fill="#fff8d8"/><rect x="56" y="513" width="8.4" height="2.5" fill="#e8b070"/><rect x="64.4" y="513" width="8.4" height="2.5" fill="#78b2e8"/><rect x="89.6" y="513" width="8.4" height="2.5" fill="#555555"/><rect x="98" y="513" width="8.4" height="2.5" fill="#e4faff"/><rect x="106.4" y="513" width="8.4" height="2.5" fill="#78b2e8"/><rect x="64.4" y="523" width="33.6" height="2.5" fill="#555555"/><rect x="98" y="523" width="8.4" height="2.5" fill="#fff8d8"/><rect x="106.4" y="523" width="8.4" height="2.5" fill="#555555"/><rect x="56" y="525.5" width="8.4" height="2.5" fill="#e8b070"/><rect x="72.8" y="525.5" width="8.4" height="2.5" fill="#4a7fd0"/><rect x="81.2" y="525.5" width="8.4" height="2.5" fill="#905068"/><rect x="89.6" y="525.5" width="8.4" height="2.5" fill="#d08850"/><rect x="64.4" y="528" width="8.4" height="2.5" fill="#e4faff"/><rect x="72.8" y="528" width="8.4" height="2.5" fill="#78b2e8"/><rect x="81.2" y="528" width="8.4" height="2.5" fill="#905068"/><rect x="89.6" y="528" width="8.4" height="2.5" fill="#d08850"/><rect x="81.2" y="530.5" width="8.4" height="2.5" fill="#4a7fd0"/><rect x="89.6" y="530.5" width="8.4" height="2.5" fill="#e8b070"/><rect x="156.3" y="505.5" width="8.3" height="2.6" fill="#6a6a9a"/><rect x="172.9" y="505.5" width="8.3" height="2.6" fill="#fff8d8"/><rect x="189.5" y="505.5" width="16.6" height="2.6" fill="#e8b070"/><rect x="214.4" y="505.5" width="8.3" height="2.6" fill="#e4faff"/><rect x="239.3" y="505.5" width="8.3" height="2.6" fill="#8a60a8"/><rect x="255.9" y="505.5" width="16.6" height="2.6" fill="#555555"/><rect x="148" y="508.1" width="8.3" height="2.6" fill="#555555"/><rect x="156.3" y="508.1" width="8.3" height="2.6" fill="#6a6a9a"/><rect x="164.6" y="508.1" width="8.3" height="2.6" fill="#e4faff"/><rect x="172.9" y="508.1" width="8.3" height="2.6" fill="#4a7fd0"/><rect x="181.2" y="508.1" width="8.3" height="2.6" fill="#555555"/><rect x="189.5" y="508.1" width="16.6" height="2.6" fill="#e8b070"/><rect x="206.1" y="508.1" width="8.3" height="2.6" fill="#555555"/><rect x="214.4" y="508.1" width="16.6" height="2.6" fill="#e4faff"/><rect x="231" y="508.1" width="16.6" height="2.6" fill="#555555"/><rect x="247.6" y="508.1" width="8.3" height="2.6" fill="#4a7fd0"/><rect x="264.2" y="508.1" width="8.3" height="2.6" fill="#ffe0b0"/><rect x="148" y="510.7" width="8.3" height="2.6" fill="#555555"/><rect x="156.3" y="510.7" width="8.3" height="2.6" fill="#6a6a9a"/><rect x="164.6" y="510.7" width="8.3" height="2.6" fill="#e4faff"/><rect x="181.2" y="510.7" width="8.3" height="2.6" fill="#e4faff"/><rect x="189.5" y="510.7" width="16.6" height="2.6" fill="#e8b070"/><rect x="206.1" y="510.7" width="8.3" height="2.6" fill="#555555"/><rect x="214.4" y="510.7" width="16.6" height="2.6" fill="#e4faff"/><rect x="239.3" y="510.7" width="8.3" height="2.6" fill="#555555"/><rect x="255.9" y="510.7" width="8.3" height="2.6" fill="#8a60a8"/><rect x="156.3" y="513.3" width="8.3" height="2.6" fill="#e4faff"/><rect x="181.2" y="513.3" width="24.9" height="2.6" fill="#555555"/><rect x="214.4" y="513.3" width="8.3" height="2.6" fill="#e4faff"/><rect x="222.7" y="513.3" width="8.3" height="2.6" fill="#4a7fd0"/><rect x="231" y="513.3" width="8.3" height="2.6" fill="#b06850"/><rect x="239.3" y="513.3" width="16.6" height="2.6" fill="#555555"/><rect x="255.9" y="513.3" width="8.3" height="2.6" fill="#4a7fd0"/><rect x="148" y="522.5" width="8.3" height="2.6" fill="#e4faff"/><rect x="181.2" y="522.5" width="8.3" height="2.6" fill="#905068"/><rect x="189.5" y="522.5" width="8.3" height="2.6" fill="#fff8d8"/><rect x="206.1" y="522.5" width="8.3" height="2.6" fill="#555555"/><rect x="231" y="522.5" width="8.3" height="2.6" fill="#ffe0b0"/><rect x="239.3" y="522.5" width="8.3" height="2.6" fill="#8a60a8"/><rect x="255.9" y="522.5" width="16.6" height="2.6" fill="#555555"/><rect x="148" y="525.1" width="16.6" height="2.6" fill="#555555"/><rect x="164.6" y="525.1" width="8.3" height="2.6" fill="#4a7fd0"/><rect x="181.2" y="525.1" width="8.3" height="2.6" fill="#905068"/><rect x="189.5" y="525.1" width="8.3" height="2.6" fill="#fff8d8"/><rect x="197.8" y="525.1" width="8.3" height="2.6" fill="#555555"/><rect x="214.4" y="525.1" width="16.6" height="2.6" fill="#555555"/><rect x="231" y="525.1" width="8.3" height="2.6" fill="#a06868"/><rect x="239.3" y="525.1" width="8.3" height="2.6" fill="#8a60a8"/><rect x="255.9" y="525.1" width="16.6" height="2.6" fill="#ffe0b0"/><rect x="156.3" y="527.7" width="8.3" height="2.6" fill="#e4faff"/><rect x="164.6" y="527.7" width="8.3" height="2.6" fill="#555555"/><rect x="172.9" y="527.7" width="16.6" height="2.6" fill="#4a7fd0"/><rect x="189.5" y="527.7" width="8.3" height="2.6" fill="#fff8d8"/><rect x="206.1" y="527.7" width="8.3" height="2.6" fill="#905068"/><rect x="214.4" y="527.7" width="8.3" height="2.6" fill="#ffe0b0"/><rect x="222.7" y="527.7" width="8.3" height="2.6" fill="#4a7fd0"/><rect x="231" y="527.7" width="8.3" height="2.6" fill="#b06850"/><rect x="239.3" y="527.7" width="8.3" height="2.6" fill="#8a60a8"/><rect x="255.9" y="527.7" width="8.3" height="2.6" fill="#555555"/><rect x="264.2" y="527.7" width="8.3" height="2.6" fill="#ffe0b0"/><rect x="172.9" y="530.3" width="8.3" height="2.6" fill="#555555"/><rect x="189.5" y="530.3" width="8.3" height="2.6" fill="#fff8d8"/><rect x="231" y="530.3" width="8.3" height="2.6" fill="#555555"/><rect x="239.3" y="530.3" width="8.3" height="2.6" fill="#8a60a8"/><rect x="255.9" y="530.3" width="8.3" height="2.6" fill="#e8b070"/><rect x="264.2" y="530.3" width="8.3" height="2.6" fill="#ffe0b0"/><rect x="476" y="505" width="2" height="9.5" fill="#c4804c"/><rect x="476" y="505" width="2" height="2" fill="#6a5a5a"/><rect x="476" y="525.5" width="2" height="9.5" fill="#c4804c"/><rect x="476" y="525.5" width="2" height="2" fill="#6a5a5a"/><rect x="561" y="505.5" width="9.6" height="2.2" fill="#4a7fd0"/><rect x="580.2" y="505.5" width="9.6" height="2.2" fill="#4a4a8a"/><rect x="599.4" y="505.5" width="9.6" height="2.2" fill="#4a4a8a"/><rect x="561" y="507.7" width="9.6" height="2.2" fill="#78b2e8"/><rect x="570.6" y="507.7" width="9.6" height="2.2" fill="#fff8d8"/><rect x="580.2" y="507.7" width="9.6" height="2.2" fill="#78b2e8"/><rect x="599.4" y="507.7" width="9.6" height="2.2" fill="#d08850"/><rect x="561" y="509.9" width="9.6" height="2.2" fill="#e4faff"/><rect x="570.6" y="509.9" width="9.6" height="2.2" fill="#fff8d8"/><rect x="580.2" y="509.9" width="9.6" height="2.2" fill="#78b2e8"/><rect x="599.4" y="509.9" width="9.6" height="2.2" fill="#b06850"/><rect x="561" y="512.1" width="9.6" height="2.2" fill="#b06850"/><rect x="570.6" y="512.1" width="9.6" height="2.2" fill="#fff8d8"/><rect x="580.2" y="512.1" width="9.6" height="2.2" fill="#d08850"/><rect x="589.8" y="512.1" width="9.6" height="2.2" fill="#555555"/><rect x="561" y="522.8" width="9.6" height="2.2" fill="#4a7fd0"/><rect x="580.2" y="522.8" width="9.6" height="2.2" fill="#4a4a8a"/><rect x="599.4" y="522.8" width="9.6" height="2.2" fill="#4a4a8a"/><rect x="561" y="525" width="9.6" height="2.2" fill="#78b2e8"/><rect x="570.6" y="525" width="9.6" height="2.2" fill="#fff8d8"/><rect x="580.2" y="525" width="9.6" height="2.2" fill="#78b2e8"/><rect x="599.4" y="525" width="9.6" height="2.2" fill="#d08850"/><rect x="561" y="527.2" width="9.6" height="2.2" fill="#e4faff"/><rect x="570.6" y="527.2" width="9.6" height="2.2" fill="#fff8d8"/><rect x="580.2" y="527.2" width="9.6" height="2.2" fill="#78b2e8"/><rect x="599.4" y="527.2" width="9.6" height="2.2" fill="#b06850"/><rect x="561" y="529.4" width="9.6" height="2.2" fill="#b06850"/><rect x="570.6" y="529.4" width="9.6" height="2.2" fill="#fff8d8"/><rect x="580.2" y="529.4" width="9.6" height="2.2" fill="#d08850"/><rect x="589.8" y="529.4" width="9.6" height="2.2" fill="#555555"/><rect x="706" y="508" width="10" height="3" fill="#c8f6ff"/><rect x="687" y="513" width="10" height="1.6" fill="#ffe0b0"/><rect x="697" y="513" width="9" height="1.6" fill="#5a5a8a"/><rect x="706" y="525" width="10" height="3" fill="#c8f6ff"/><rect x="687" y="530" width="10" height="1.6" fill="#ffe0b0"/><rect x="697" y="530" width="9" height="1.6" fill="#5a5a8a"/><rect x="562.6" y="410.8" width="2.4" height="2.2" fill="#ff9ed8"/><rect x="558" y="413" width="3.8" height="3" fill="#ffc8e8"/><rect x="555" y="413" width="3" height="3" fill="#ffd8a0"/><rect x="555" y="422" width="3" height="3" fill="#fff4c0"/><rect x="565.5" y="422" width="3.5" height="3" fill="#ffd8a0"/><rect x="569" y="422" width="3" height="3" fill="#ff8ec0"/><rect x="572" y="413" width="4" height="3" fill="#ff9448"/><rect x="572" y="410.8" width="4" height="2.2" fill="#fff4d8"/><rect x="589.4" y="410.8" width="3.9" height="2.2" fill="#ff9ed8"/><rect x="586.3" y="413" width="3.1" height="3" fill="#ffc8e8"/><rect x="582.6" y="413" width="3.7" height="3" fill="#fff0c0"/><rect x="579" y="418.4" width="3" height="2.6" fill="#ffb0e0"/><rect x="576" y="418.4" width="3" height="2" fill="#ffd8a0"/><rect x="579" y="410.8" width="3" height="2.2" fill="#ffe0f0"/></svg>
<!--/MOSAIC-->
</body>
</html>
